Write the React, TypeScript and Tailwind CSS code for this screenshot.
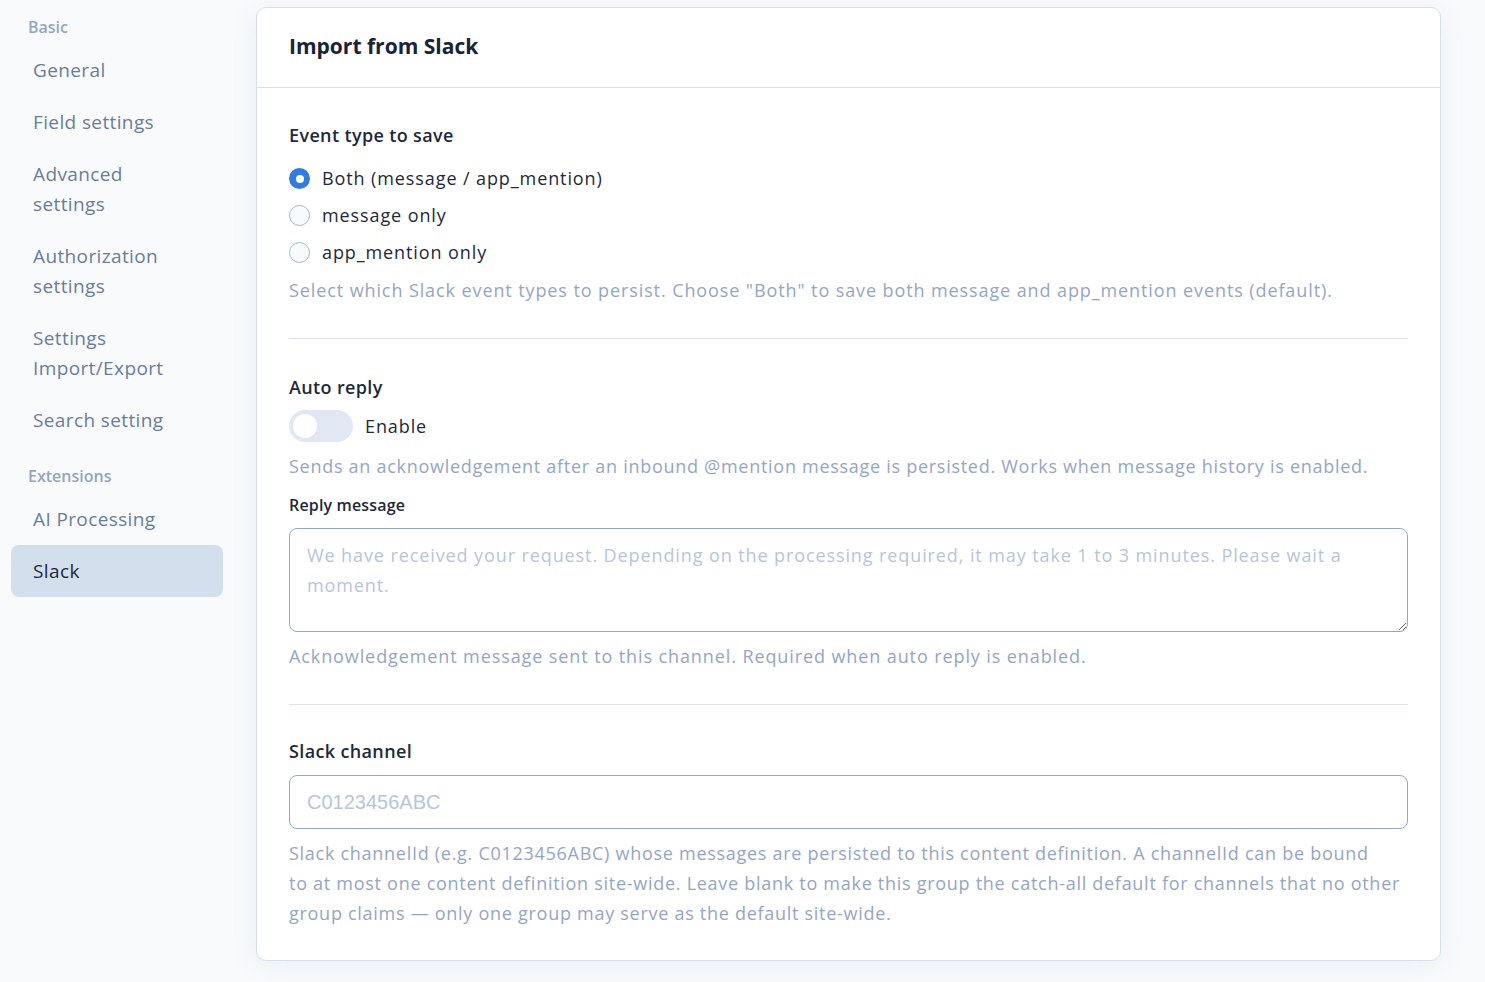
import React, { useState } from "react";

const navGroups = [
  {
    title: "Basic",
    items: [
      "General",
      "Field settings",
      "Advanced settings",
      "Authorization settings",
      "Settings Import/Export",
      "Search setting",
    ],
  },
  { title: "Extensions", items: ["AI Processing", "Slack"] },
];

const eventTypes = [
  { id: "both", label: "Both (message / app_mention)" },
  { id: "message", label: "message only" },
  { id: "app_mention", label: "app_mention only" },
];

const Sidebar = () => (
  <aside className="w-[234px] shrink-0 pl-[11px] pr-[11px] pt-[16px]">
    {navGroups.map((group, gi) => (
      <div key={group.title} className={gi > 0 ? "mt-[19px]" : ""}>
        <p className="pl-[17px] text-[16px] font-semibold leading-[22px] text-[#94a6c2] mb-[6px]">
          {group.title}
        </p>
        <ul className="flex flex-col">
          {group.items.map((item) => {
            const active = item === "Slack";
            return (
              <li
                key={item}
                className={`rounded-lg px-[22px] py-[11px] text-[19px] leading-[30px] tracking-[0.02em] ${
                  active ? "bg-[#d3dfed] text-[#1e293b]" : "text-[#6a7d9c]"
                } ${item.length > 14 ? "pr-[40px]" : ""}`}
              >
                {item}
              </li>
            );
          })}
        </ul>
      </div>
    ))}
  </aside>
);

const Helper = ({ children, tight }: { children: React.ReactNode; tight?: boolean }) => (
  <p
    className={`text-[18px] leading-[30px] text-[#94a6c6] ${
      tight ? "tracking-[0.04em]" : "tracking-[0.05em]"
    }`}
  >
    {children}
  </p>
);

export default function App() {
  const [eventType, setEventType] = useState("both");
  const [autoReply, setAutoReply] = useState(false);

  return (
    <div
      className="min-h-[982px] w-full bg-[#f8fafc] flex"
      style={{ fontFamily: "'Open Sans', sans-serif" }}
    >
      <Sidebar />
      <main className="flex-1 pt-[7px] pr-[44px] pl-[22px] pb-[20px]">
        <section className="rounded-[10px] border border-[#d6e0ec] bg-white shadow-[0_4px_24px_rgba(148,163,184,0.12)]">
          <header className="h-[80px] border-b border-[#d6e0ec] px-[32px] flex items-center">
            <h1 className="text-[21px] font-bold text-[#172338] -mt-[2px]">Import from Slack</h1>
          </header>
          <div className="px-[32px] pt-[32px] pb-[32px]">
            {/* Event type */}
            <div className="pb-[33px] border-b border-[#dde4ee]">
              <h2 className="text-[18px] font-semibold leading-[30px] tracking-[0.02em] text-[#1e293b]">
                Event type to save
              </h2>
              <div className="mt-[10px] flex flex-col">
                {eventTypes.map((t) => {
                  const checked = eventType === t.id;
                  return (
                    <label
                      key={t.id}
                      className="flex items-center gap-[12px] h-[37px] cursor-pointer"
                      onClick={() => setEventType(t.id)}
                    >
                      <span
                        className={`w-[21px] h-[21px] rounded-full flex items-center justify-center ${
                          checked
                            ? "bg-[#2f7de1]"
                            : "border border-[#a7b6cc] bg-[#f8fafc]"
                        }`}
                      >
                        {checked && <span className="w-[8px] h-[8px] rounded-full bg-white" />}
                      </span>
                      <span className="text-[18px] tracking-[0.05em] text-[#1e293b]">{t.label}</span>
                    </label>
                  );
                })}
              </div>
              <div className="mt-[4px]">
                <Helper>
                  Select which Slack event types to persist. Choose "Both" to save both message and
                  app_mention events (default).
                </Helper>
              </div>
            </div>

            {/* Auto reply */}
            <div className="pt-[33px] pb-[33px] border-b border-[#dde4ee]">
              <h2 className="text-[18px] font-semibold leading-[30px] tracking-[0.02em] text-[#1e293b]">
                Auto reply
              </h2>
              <div className="mt-[8px] flex items-center gap-[12px]">
                <button
                  type="button"
                  onClick={() => setAutoReply(!autoReply)}
                  className={`w-[64px] h-[32px] rounded-full p-[4px] flex ${
                    autoReply ? "bg-[#2f7de1] justify-end" : "bg-[#e1e8f3] justify-start"
                  }`}
                >
                  <span className="w-[24px] h-[24px] rounded-full bg-white" />
                </button>
                <span className="text-[18px] tracking-[0.05em] text-[#1e293b]">Enable</span>
              </div>
              <div className="mt-[9px]">
                <Helper tight>
                  Sends an acknowledgement after an inbound @mention message is persisted. Works when
                  message history is enabled.
                </Helper>
              </div>
              <label className="block mt-[12px] text-[16px] font-semibold leading-[24px] tracking-[0.01em] text-[#1e293b]">
                Reply message
              </label>
              <textarea
                rows={3}
                placeholder="We have received your request. Depending on the processing required, it may take 1 to 3 minutes. Please wait a moment."
                className="mt-[11px] block w-full h-[104px] rounded-lg border border-[#93a8c8] px-[17px] py-[11px] text-[18px] leading-[30px] tracking-[0.05em] text-[#1e293b] placeholder:text-[#b6c5dd] outline-none"
              />
              <div className="mt-[9px]">
                <Helper>Acknowledgement message sent to this channel. Required when auto reply is enabled.</Helper>
              </div>
            </div>

            {/* Slack channel */}
            <div className="pt-[31px]">
              <h2 className="text-[18px] font-semibold leading-[30px] tracking-[0.02em] text-[#1e293b]">
                Slack channel
              </h2>
              <input
                type="text"
                placeholder="C0123456ABC"
                className="mt-[9px] block w-full h-[54px] rounded-lg border border-[#93a8c8] px-[17px] text-[20px] text-[#1e293b] placeholder:text-[#b6c5dd] outline-none"
                style={{ fontFamily: "'Liberation Sans', Arial, sans-serif" }}
              />
              <div className="mt-[9px]">
                <Helper tight>
                  Slack channelId (e.g. C0123456ABC) whose messages are persisted to this content
                  definition. A channelId can be bound
                  <br />
                  to at most one content definition site-wide. Leave blank to make this group the
                  catch-all default for channels that no other group claims — only one group may
                  serve as the default site-wide.
                </Helper>
              </div>
            </div>
          </div>
        </section>
      </main>
    </div>
  );
}
